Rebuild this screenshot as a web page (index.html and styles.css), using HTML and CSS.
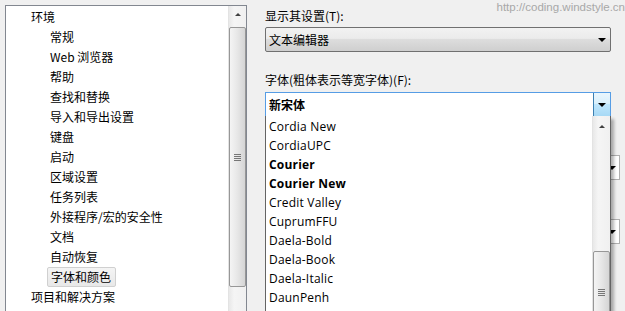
FILE: index.html
```html
<!DOCTYPE html>
<html>
<head>
    <title>选项 - 字体和颜色</title>
    <link rel="stylesheet" href="styles.css">
</head>
<body>
    <div class="window">
        <div class="watermark">http://coding.windstyle.cn</div>

        <div class="tree-panel">
            <ul class="tree">
                <li class="node">环境</li>
                <li class="leaf">常规</li>
                <li class="leaf">Web 浏览器</li>
                <li class="leaf">帮助</li>
                <li class="leaf">查找和替换</li>
                <li class="leaf">导入和导出设置</li>
                <li class="leaf">键盘</li>
                <li class="leaf">启动</li>
                <li class="leaf">区域设置</li>
                <li class="leaf">任务列表</li>
                <li class="leaf">外接程序/宏的安全性</li>
                <li class="leaf">文档</li>
                <li class="leaf">自动恢复</li>
                <li class="leaf"><span class="selected">字体和颜色</span></li>
                <li class="node">项目和解决方案</li>
            </ul>
            <div class="scrollbar tree-scroll">
                <div class="arrow-up"></div>
                <div class="thumb"><span class="grip"></span></div>
            </div>
        </div>

        <div class="settings">
            <div class="label">显示其设置(T):</div>
            <div class="dropdown">
                <span>文本编辑器</span>
                <span class="caret"></span>
            </div>

            <div class="label second">字体(粗体表示等宽字体)(F):</div>
            <div class="combo">
                <span class="combo-text">新宋体</span>
                <span class="combo-button"><span class="caret"></span></span>
            </div>

            <div class="behind">
                <div class="behind-box"><span class="caret"></span></div>
                <div class="behind-box"><span class="caret"></span></div>
            </div>

            <div class="font-list">
                <ul class="fonts">
                    <li>Cordia New</li>
                    <li>CordiaUPC</li>
                    <li class="mono">Courier</li>
                    <li class="mono">Courier New</li>
                    <li>Credit Valley</li>
                    <li>CuprumFFU</li>
                    <li>Daela-Bold</li>
                    <li>Daela-Book</li>
                    <li>Daela-Italic</li>
                    <li>DaunPenh</li>
                </ul>
                <div class="scrollbar list-scroll">
                    <div class="arrow-up"></div>
                    <div class="thumb"><span class="grip"></span></div>
                </div>
            </div>
        </div>
    </div>
</body>
</html>
```

FILE: styles.css
```css
body {
    margin: 0;
    background: #f0f0f0;
    font-family: "Noto Sans CJK SC", "Noto Sans", sans-serif;
    font-size: 12px;
    color: #000;
}

.window {
    position: relative;
    display: flex;
    width: 625px;
    height: 311px;
    overflow: hidden;
}

.watermark {
    position: absolute;
    top: 1px;
    right: 0;
    color: #a8a8a8;
    font-family: "Liberation Sans", sans-serif;
    font-size: 11.5px;
}

/* left tree */
.tree-panel {
    display: flex;
    margin: 5px 0 0 5px;
    width: 240px;
    height: 320px;
    border: 1px solid #828790;
    background: #fff;
}

.tree {
    flex: 1;
    list-style: none;
    margin: 0;
    padding: 1px 0 0;
}

.tree li {
    height: 20px;
    line-height: 20px;
    white-space: nowrap;
}

.tree .node {
    padding-left: 25px;
}

.tree .leaf {
    padding-left: 44px;
}

.selected {
    display: inline-block;
    height: 18px;
    line-height: 18px;
    margin-left: -3px;
    padding: 0 4px 0 3px;
    background: linear-gradient(#f4f4f4, #e8e8e8);
    border: 1px solid #d0d0d0;
    border-radius: 2px;
}

/* scrollbars */
.scrollbar {
    width: 17px;
    background: linear-gradient(to right, #e8e8e8, #f5f5f5 30%, #f0f0f0);
    border-left: 1px solid #e3e3e3;
    position: relative;
}

.arrow-up {
    height: 17px;
    position: relative;
}

.arrow-up::after {
    content: "";
    position: absolute;
    left: 6px;
    top: 7px;
    border-left: 3px solid transparent;
    border-right: 3px solid transparent;
    border-bottom: 3px solid #404040;
}

.thumb {
    position: absolute;
    left: 0;
    width: 15px;
    border: 1px solid #979797;
    border-radius: 2px;
    background: linear-gradient(to right, #f4f4f4, #e8e8e8 45%, #d5d5d5);
    display: flex;
    align-items: center;
    justify-content: center;
}

.grip {
    width: 7px;
    height: 7px;
    background: repeating-linear-gradient(#5a5a5a 0 1px, transparent 1px 2px);
    opacity: 0.8;
}

.tree-scroll .thumb {
    top: 21px;
    height: 258px;
}

/* right settings */
.settings {
    position: relative;
    margin-left: 18px;
    width: 346px;
    padding-top: 8px;
}

.label {
    height: 16px;
    line-height: 16px;
    white-space: nowrap;
}

.label.second {
    margin-top: 20px;
}

.dropdown {
    display: flex;
    align-items: center;
    justify-content: space-between;
    margin-top: 3px;
    height: 23px;
    padding: 0 4px 0 3px;
    border: 1px solid #707070;
    border-radius: 2px;
    background: linear-gradient(#f2f2f2 0, #ebebeb 45%, #dddddd 50%, #cfcfcf 100%);
}

.caret {
    display: inline-block;
    border-left: 4px solid transparent;
    border-right: 4px solid transparent;
    border-top: 4px solid #000;
}

.combo {
    display: flex;
    margin-top: 4px;
    height: 23px;
    border: 1px solid #569de5;
    background: #fff;
}

.combo-text {
    flex: 1;
    line-height: 23px;
    padding-left: 3px;
    font-weight: bold;
}

.combo-button {
    width: 16px;
    display: flex;
    align-items: center;
    justify-content: center;
    border-left: 1px solid #3c7fb1;
    background: linear-gradient(#eaf6fd 0, #d9f0fc 45%, #bee6fd 50%, #a7d9f5 100%);
}

.behind {
    display: flex;
    flex-direction: column;
    gap: 39px;
    margin-top: 38px;
    margin-right: -9px;
}

.behind-box {
    height: 23px;
    border: 1px solid #b0b0b0;
    background: #fff;
    display: flex;
    align-items: center;
    justify-content: flex-end;
    padding-right: 3px;
}

/* dropped-down font list */
.font-list {
    position: absolute;
    left: 0;
    top: 116px;
    width: 344px;
    height: 210px;
    display: flex;
    background: #fff;
    border: 1px solid #646464;
    border-top: none;
    box-shadow: 3px 3px 3px rgba(0, 0, 0, 0.3);
}

.fonts {
    flex: 1;
    list-style: none;
    margin: 0;
    padding: 1px 0 0 3px;
    font-family: "Open Sans", sans-serif;
    font-size: 12px;
    letter-spacing: 0.2px;
}

.fonts li {
    height: 19px;
    line-height: 19px;
}

.fonts .mono {
    font-weight: bold;
}

.list-scroll .arrow-up {
    margin-top: 2px;
}

.list-scroll .thumb {
    top: 135px;
    height: 80px;
}
```
